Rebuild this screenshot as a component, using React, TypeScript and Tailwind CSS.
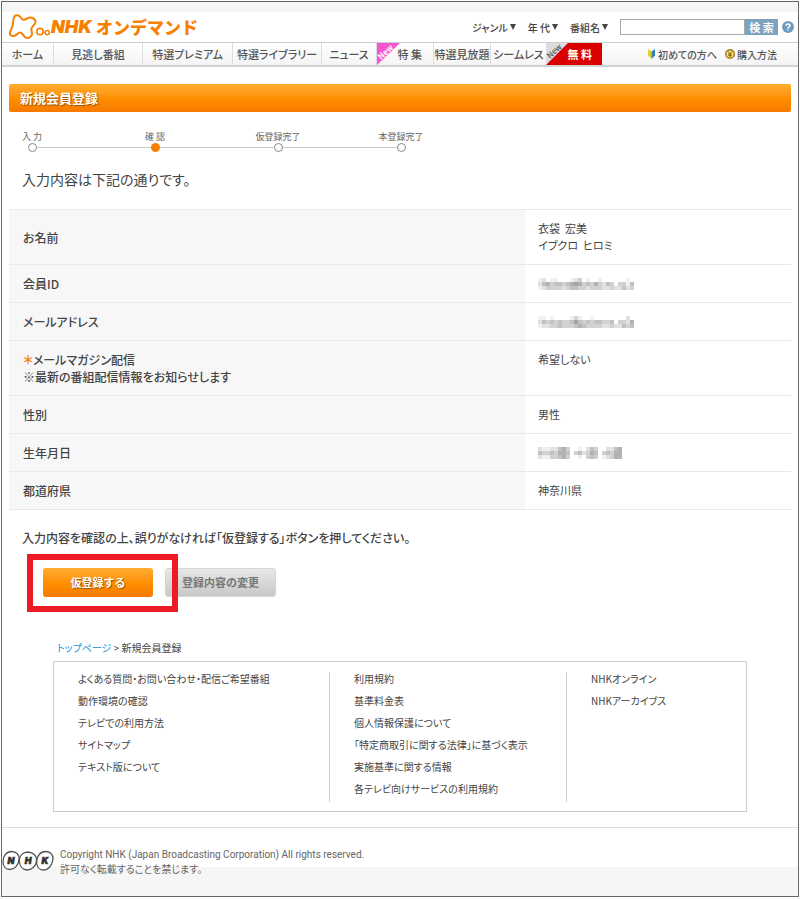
const navItems = [
  { label: 'ホーム', width: 'w-[52px]' },
  { label: '見逃し番組', width: 'w-[89px]' },
  { label: '特選プレミアム', width: 'w-[90px]' },
  { label: '特選ライブラリー', width: 'w-[89px]' },
  { label: 'ニュース', width: 'w-[55px]' },
]

const filters = ['ジャンル', '年 代', '番組名']

const steps = [
  { label: '入 力', current: false },
  { label: '確 認', current: true },
  { label: '仮登録完了', current: false },
  { label: '本登録完了', current: false },
]

// Darkness of each 4px block, 0 to 9
const memberId = [
  '120110001230100100000010',
  '245344345653435324303314',
  '123333234433233322322423',
]
const mailAddress = [
  '110100001310010000000020',
  '243434334643434433403325',
  '122334333454333322322434',
]
const birthday = [
  '211224530010243002245',
  '433435540342354034355',
  '211334530010343012355',
]

const rows = [
  { head: ['お名前'], value: ['衣袋  宏美', 'イブクロ  ヒロミ'] },
  { head: ['会員ID'], mask: memberId },
  { head: ['メールアドレス'], mask: mailAddress },
  { head: ['メールマガジン配信', '※最新の番組配信情報をお知らせします'], value: ['希望しない'], marked: true },
  { head: ['性別'], value: ['男性'] },
  { head: ['生年月日'], mask: birthday },
  { head: ['都道府県'], value: ['神奈川県'] },
]

const footerLinks = [
  {
    className: 'w-[275px] pl-6',
    links: [
      'よくある質問・お問い合わせ・配信ご希望番組',
      '動作環境の確認',
      'テレビでの利用方法',
      'サイトマップ',
      'テキスト版について',
    ],
  },
  {
    className: 'w-[237px] border-l border-[#ccc] pl-6',
    links: [
      '利用規約',
      '基準料金表',
      '個人情報保護について',
      '「特定商取引に関する法律」に基づく表示',
      '実施基準に関する情報',
      '各テレビ向けサービスの利用規約',
    ],
  },
  {
    className: 'flex-1 border-l border-[#ccc] pl-6',
    links: ['NHKオンライン', 'NHKアーカイブス'],
  },
]

function Mosaic({ data }: { data: string[] }) {
  return (
    <svg width={data[0].length * 4} height="12" className="block" aria-hidden="true" shapeRendering="crispEdges">
      {data.map((line, y) =>
        line.split('').map((level, x) => (
          <rect key={`${x}-${y}`} x={x * 4} y={y * 4} width="4" height="4" fill="#333" opacity={Number(level) * 0.075} />
        )),
      )}
    </svg>
  )
}

function Logo() {
  return (
    <a href="#" className="flex items-center text-[#f78000]" aria-label="NHKオンデマンド">
      <svg width="42" height="26" viewBox="0 0 42 26" fill="none" stroke="currentColor">
        <path
          d="M5 3.4C5.8 1 8.6 .8 10.4 2C12.2 3.4 12.4 5.8 14.4 5.8C16.8 5.8 18.6 3.4 21.4 3.6C24.8 3.8 27 6 26.4 8.6C25.8 11 22.8 12.4 22.4 14.6C22 17 23.6 18.6 22.8 20.8C21.6 23.8 18.4 25 16.2 23.2C14 21.4 13.4 18.6 11.2 18.6C8.8 18.6 7.6 21.6 4.6 22C1.6 22.2 .6 20.6 1.2 18.2C1.8 15.8 3.4 13.4 3.8 10.6C4.2 8 4.2 5.4 5 3.4Z"
          strokeWidth="2"
        />
        <circle cx="31" cy="17.6" r="3.2" strokeWidth="1.6" />
        <circle cx="38.2" cy="18.6" r="2.1" strokeWidth="1.6" />
      </svg>
      <span className="font-[Inter] text-lg font-black italic">NHK</span>
      <span className="ml-1 text-[17px] leading-6 font-black [font-feature-settings:normal]">オンデマンド</span>
    </a>
  )
}

function Header() {
  return (
    <header>
      <div className="h-[10px] bg-[#f6f6f6]" />
      <div className="flex h-[30px] items-center justify-between pl-[7px] pr-1">
        <Logo />
        <form className="flex items-center text-[10px] font-medium">
          {filters.map((filter) => (
            <button key={filter} type="button" className="mr-3 flex items-center gap-[2px]">
              {filter}
              <svg width="6" height="6">
                <path d="M0 0H6L3 6Z" fill="currentColor" />
              </svg>
            </button>
          ))}
          <input aria-label="番組検索" className="h-4 w-[125px] border border-[#aaa] bg-white px-1" />
          <button type="submit" className="h-4 w-[33px] bg-[#7ba3c0] text-[11px] leading-4 font-bold text-white">
            検 索
          </button>
          <a href="#" aria-label="ヘルプ" className="ml-1">
            <svg width="12" height="12" viewBox="0 0 12 12">
              <circle cx="6" cy="6" r="6" fill="#6e9cbd" />
              <path d="M4 4.7C4 2.4 8 2.4 8 4.5C8 6 6 5.8 6 7.4M6 8.4V9.6" fill="none" stroke="#fff" strokeWidth="1.5" />
            </svg>
          </a>
        </form>
      </div>
      <nav className="flex h-[25px] border-t border-b-2 border-t-[#ccc] border-b-[#d2d2d2] bg-linear-to-b from-white to-[#f4f4f4] text-[11px] font-medium text-[#555]">
        {navItems.map((item) => (
          <a key={item.label} href="#" className={`${item.width} flex items-center justify-center border-r border-[#ddd] whitespace-nowrap`}>
            {item.label}
          </a>
        ))}
        <a href="#" className="relative flex w-[57px] items-center justify-end border-r border-[#ddd] pr-[11px]">
          <svg width="23" height="22" className="absolute top-0 left-0 overflow-visible">
            <polygon points="0,0 23,0 0,22" fill="#f556d0" />
            <text x="4" y="17" transform="rotate(-43 4 17)" fill="#fff" className="text-[8px] font-bold">New</text>
          </svg>
          特 集
        </a>
        <a href="#" className="flex w-[57px] items-center justify-center border-r border-[#ddd] whitespace-nowrap">特選見放題</a>
        <a href="#" className="flex w-[55px] items-center justify-center whitespace-nowrap">シームレス</a>
        <a href="#" className="relative flex w-[56px] items-center justify-end bg-[#d90000] pr-[10px] font-bold text-white">
          <svg width="24" height="22" className="absolute top-0 left-0 overflow-visible">
            <polygon points="0,0 22,0 0,22" fill="#ddd" />
            <text x="4" y="16" transform="rotate(-43 4 16)" fill="#555" className="text-[8px] font-medium">New</text>
          </svg>
          無 料
        </a>
        <div className="ml-auto flex items-center gap-2 pr-[21px] text-[10px]">
          <a href="#" className="flex items-center gap-[3px]">
            <svg width="7" height="10" viewBox="0 0 7 10">
              <path d="M0 0L3.5 2.5V10L0 6.5Z" fill="#e3cf2b" />
              <path d="M7 0L3.5 2.5V10L7 6.5Z" fill="#2d87b4" />
            </svg>
            初めての方へ
          </a>
          <a href="#" className="flex items-center gap-[2px]">
            <svg width="10" height="10" viewBox="0 0 10 10" fill="none">
              <circle cx="5" cy="5" r="4.3" fill="#f3df8c" stroke="#a07c10" strokeWidth="1.4" />
              <path d="M3 2.4L5 5L7 2.4M5 5V8M3.3 5.3H6.7M3.3 6.6H6.7" stroke="#8a6a08" />
            </svg>
            購入方法
          </a>
        </div>
      </nav>
    </header>
  )
}

function Steps() {
  return (
    <ol className="relative mt-[19px] flex w-fit gap-[63px] text-[9px] leading-3 text-[#666] before:absolute before:right-[30px] before:bottom-1 before:left-[30px] before:h-px before:bg-[#ccc]">
      {steps.map((step) => (
        <li key={step.label} className="relative flex w-[60px] flex-col items-center">
          {step.label}
          <span
            className={
              step.current
                ? 'h-[9px] w-[9px] rounded-full bg-[#f77f00]'
                : 'h-[9px] w-[9px] rounded-full border border-[#888] bg-white'
            }
          />
        </li>
      ))}
    </ol>
  )
}

function Confirmation() {
  return (
    <table className="w-full border-t border-[#e9e9e9] text-left text-[11px] leading-[17px]">
      <tbody>
        {rows.map((row) => (
          <tr key={row.head[0]} className="border-b border-[#e9e9e9]">
            <th scope="row" className="w-[66%] bg-[#f7f7f7] py-[10px] pl-[14px] text-xs leading-[17px] font-medium">
              {row.head.map((line, i) => (
                <div key={line}>
                  {row.marked && i === 0 && <span className="font-bold text-[#f77f00]">＊</span>}
                  {line}
                </div>
              ))}
            </th>
            <td className={row.mask ? 'pl-[13px] align-middle' : 'py-[10px] pl-[13px] align-top'}>
              {row.mask && <Mosaic data={row.mask} />}
              {row.value?.map((line) => <div key={line} className="whitespace-pre">{line}</div>)}
            </td>
          </tr>
        ))}
      </tbody>
    </table>
  )
}

function FooterLogo() {
  return (
    <svg width="52" height="22" viewBox="0 0 52 22" fill="#fff" stroke="#555" strokeWidth="1.3">
      <path d="M9.5 1.5C14.5 1.5 17.5 5 17 9.5C16.5 15 12.5 19.5 8 19.5C3.5 19.5 1 16 1 11.5C1 6 4.5 1.5 9.5 1.5Z" />
      <path d="M26 2C31.5 2.5 35 6 34.5 11C34 16.5 29.5 20 25 20C20 19.5 17.3 15.5 17.3 10.5C17.3 5.5 21 2 26 2Z" />
      <path d="M43.5 1.5C48 1.5 51.3 4.5 51 9C50.5 15 46.5 20 41.5 20C37 20 34.6 16.5 34.6 12C34.6 6 38.5 1.5 43.5 1.5Z" />
      <g fill="#333" stroke="#333" strokeWidth=".6" textAnchor="middle" className="font-[Inter] text-[9px] font-black italic">
        <text x="9" y="14">N</text>
        <text x="26" y="14">H</text>
        <text x="43" y="14">K</text>
      </g>
    </svg>
  )
}

export default function App() {
  return (
    <div lang="ja" className="min-h-screen bg-white p-px font-['Noto_Sans_CJK_JP',sans-serif] text-[#444] [font-feature-settings:'palt']">
      <div className="border border-[#666]">
        <Header />
        <main className="px-[7px] pt-[17px]">
          <h1 className="h-7 rounded-[2px] bg-linear-to-b from-[#ffac30] via-[#ff9000] to-[#f77900] pl-[11px] text-[13px] leading-7 font-bold text-white text-shadow-[1px_1px_1px_#9a5200]">
            新規会員登録
          </h1>
          <div className="-mx-[7px]">
            <Steps />
          </div>
          <p className="mt-[17px] mb-5 pl-[13px] text-sm leading-5">入力内容は下記の通りです。</p>
          <Confirmation />
          <p className="mt-[18px] pl-[13px] text-xs leading-5 font-medium">
            入力内容を確認の上、誤りがなければ「仮登録する」ボタンを押してください。
          </p>
          <div className="relative mt-5 flex gap-3 pl-[34px] [font-feature-settings:normal]">
            <button className="h-[29px] w-[110px] rounded-[3px] bg-linear-to-b from-[#ffac30] via-[#ff9000] to-[#f77900] text-[11px] font-bold text-white text-shadow-[1px_1px_1px_#9a5200]">
              仮登録する
            </button>
            <button className="h-[29px] w-[111px] rounded-[3px] border border-[#d5d5d5] bg-linear-to-b from-[#e8e8e8] to-[#c8c8c8] text-[11px] font-bold text-[#777]">
              登録内容の変更
            </button>
            <span className="pointer-events-none absolute -top-[14px] left-[18px] h-[58px] w-[151px] border-[6px] border-[#ed1c24]" />
          </div>
        </main>
        <footer className="mt-[44px]">
          <div className="mx-[51px] text-[10px] leading-[14px]">
            <nav className="pl-1">
              <a href="#" className="text-[#1492d2]">トップページ</a> &gt; 新規会員登録
            </nav>
            <div className="mt-[6px] flex border border-[#ccc] pt-[10px] pb-[9px]">
              {footerLinks.map((column) => (
                <ul key={column.links[0]} className={`${column.className} space-y-2 pb-[6px]`}>
                  {column.links.map((link) => (
                    <li key={link}><a href="#">{link}</a></li>
                  ))}
                </ul>
              ))}
            </div>
          </div>
          <div className="mt-[15px] flex items-start gap-[6px] border-t border-[#ddd] bg-linear-to-b from-white from-[39px] to-[#f6f6f6] to-[39px] pt-[19px] pb-[19px] text-[#666]">
            <div className="pt-[3px]">
              <FooterLogo />
            </div>
            <p className="font-[Roboto,'Noto_Sans_CJK_JP',sans-serif] text-[10px] leading-[15px]">
              Copyright NHK (Japan Broadcasting Corporation) All rights reserved.
              <br />
              許可なく転載することを禁じます。
            </p>
          </div>
        </footer>
      </div>
    </div>
  )
}
